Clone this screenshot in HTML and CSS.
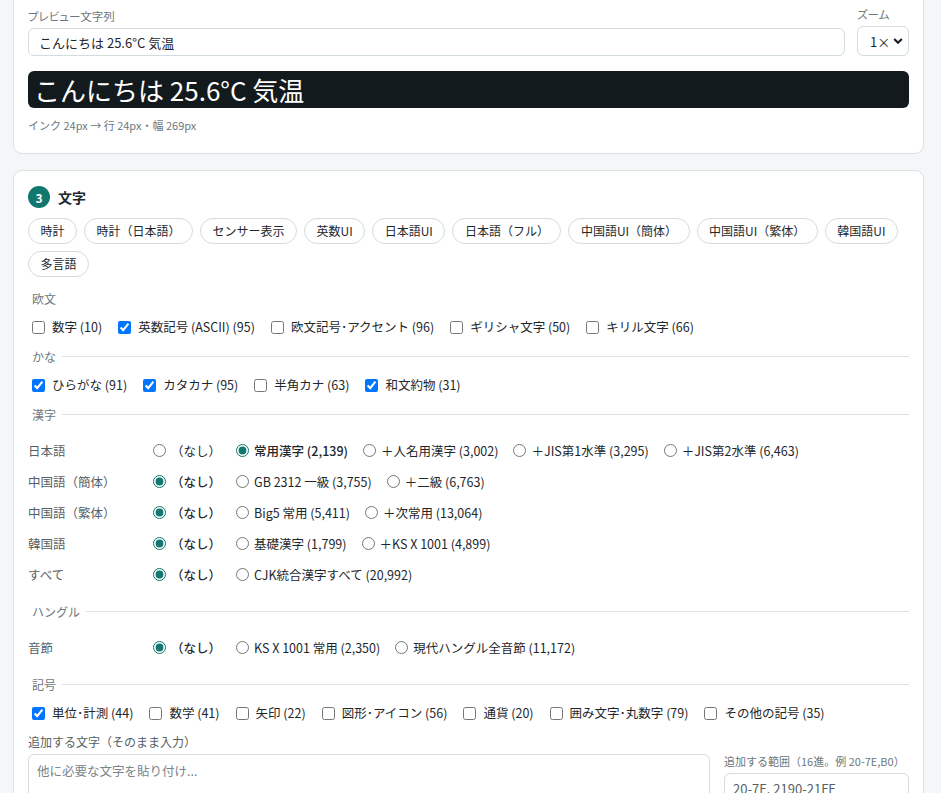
FILE: index.html
```html
<!DOCTYPE html>
<html lang="ja">
<head>
<meta charset="utf-8">
<title>文字</title>
<link rel="stylesheet" href="styles.css">
</head>
<body>
<div class="page">
  <section class="card card-preview">
    <div class="field-row">
      <div class="field grow">
        <label class="field-label">プレビュー文字列</label>
        <input class="text-input" type="text" value="こんにちは 25.6°C 気温">
      </div>
      <div class="field">
        <label class="field-label">ズーム</label>
        <div class="select-wrap">
          <select class="select"><option>1×</option></select>
          <svg class="chev" width="10" height="8" viewBox="0 0 10 8"><path d="M1.2 2 L5 5.8 L8.8 2" fill="none" stroke="#1a1f22" stroke-width="2.2"/></svg>
        </div>
      </div>
    </div>
    <div class="preview">こんにちは 25.6°C 気温</div>
    <div class="metrics">インク 24px → 行 24px・幅 269px</div>
  </section>

  <section class="card card-chars">
    <div class="card-head">
      <span class="badge">3</span>
      <h2 class="card-title">文字</h2>
    </div>
    <div class="chips">
      <button class="chip">時計</button>
      <button class="chip">時計（日本語）</button>
      <button class="chip">センサー表示</button>
      <button class="chip">英数UI</button>
      <button class="chip">日本語UI</button>
      <button class="chip">日本語（フル）</button>
      <button class="chip">中国語UI（簡体）</button>
      <button class="chip">中国語UI（繁体）</button>
      <button class="chip">韓国語UI</button>
      <button class="chip">多言語</button>
    </div>

    <div class="sec-title first">欧文</div>
    <div class="opts">
      <label class="opt"><input type="checkbox">数字 (10)</label>
      <label class="opt"><input type="checkbox" checked>英数記号 (ASCII) (95)</label>
      <label class="opt"><input type="checkbox">欧文記号･アクセント (96)</label>
      <label class="opt"><input type="checkbox">ギリシャ文字 (50)</label>
      <label class="opt"><input type="checkbox">キリル文字 (66)</label>
    </div>

    <div class="sec-title">かな</div>
    <div class="opts">
      <label class="opt"><input type="checkbox" checked>ひらがな (91)</label>
      <label class="opt"><input type="checkbox" checked>カタカナ (95)</label>
      <label class="opt"><input type="checkbox">半角カナ (63)</label>
      <label class="opt"><input type="checkbox" checked>和文約物 (31)</label>
    </div>

    <div class="sec-title">漢字</div>
    <div class="radio-grid">
      <div class="r-label">日本語</div>
      <div class="r-opts">
        <label class="ropt"><input type="radio" name="ja">（なし）</label>
        <label class="ropt on"><input type="radio" name="ja" checked>常用漢字 (2,139)</label>
        <label class="ropt"><input type="radio" name="ja">＋人名用漢字 (3,002)</label>
        <label class="ropt"><input type="radio" name="ja">＋JIS第1水準 (3,295)</label>
        <label class="ropt"><input type="radio" name="ja">＋JIS第2水準 (6,463)</label>
      </div>
      <div class="r-label">中国語（簡体）</div>
      <div class="r-opts">
        <label class="ropt on"><input type="radio" name="sc" checked>（なし）</label>
        <label class="ropt"><input type="radio" name="sc">GB 2312 一級 (3,755)</label>
        <label class="ropt"><input type="radio" name="sc">＋二級 (6,763)</label>
      </div>
      <div class="r-label">中国語（繁体）</div>
      <div class="r-opts">
        <label class="ropt on"><input type="radio" name="tc" checked>（なし）</label>
        <label class="ropt"><input type="radio" name="tc">Big5 常用 (5,411)</label>
        <label class="ropt"><input type="radio" name="tc">＋次常用 (13,064)</label>
      </div>
      <div class="r-label">韓国語</div>
      <div class="r-opts">
        <label class="ropt on"><input type="radio" name="ko" checked>（なし）</label>
        <label class="ropt"><input type="radio" name="ko">基礎漢字 (1,799)</label>
        <label class="ropt"><input type="radio" name="ko">＋KS X 1001 (4,899)</label>
      </div>
      <div class="r-label">すべて</div>
      <div class="r-opts">
        <label class="ropt on"><input type="radio" name="all" checked>（なし）</label>
        <label class="ropt"><input type="radio" name="all">CJK統合漢字すべて (20,992)</label>
      </div>
    </div>

    <div class="sec-title">ハングル</div>
    <div class="radio-grid">
      <div class="r-label">音節</div>
      <div class="r-opts">
        <label class="ropt on"><input type="radio" name="hg" checked>（なし）</label>
        <label class="ropt"><input type="radio" name="hg">KS X 1001 常用 (2,350)</label>
        <label class="ropt"><input type="radio" name="hg">現代ハングル全音節 (11,172)</label>
      </div>
    </div>

    <div class="sec-title">記号</div>
    <div class="opts">
      <label class="opt"><input type="checkbox" checked>単位･計測 (44)</label>
      <label class="opt"><input type="checkbox">数学 (41)</label>
      <label class="opt"><input type="checkbox">矢印 (22)</label>
      <label class="opt"><input type="checkbox">図形･アイコン (56)</label>
      <label class="opt"><input type="checkbox">通貨 (20)</label>
      <label class="opt"><input type="checkbox">囲み文字･丸数字 (79)</label>
      <label class="opt"><input type="checkbox">その他の記号 (35)</label>
    </div>

    <div class="extra">
      <div class="field grow">
        <label class="field-label dark">追加する文字（そのまま入力）</label>
        <textarea class="textarea" placeholder="他に必要な文字を貼り付け..."></textarea>
      </div>
      <div class="field range">
        <label class="field-label">追加する範囲（16進。例 20-7E,B0）</label>
        <input class="text-input range-input" type="text" value="20-7E, 2190-21FF">
      </div>
    </div>
  </section>
</div>
</body>
</html>
```

FILE: styles.css
```css
* { box-sizing: border-box; }
html, body { margin: 0; padding: 0; }
body {
  background: #f4f6f8;
  font-family: "Noto Sans CJK JP", "Noto Sans", sans-serif;
  color: #1e272b;
  font-size: 12.5px;
  overflow: hidden;
}
.page {
  padding: 0 17px 0 13px;
}
.card {
  background: #ffffff;
  border: 1px solid #d9e1e4;
  border-radius: 9px;
  padding: 14px;
}
.card-preview {
  margin-top: -9px;
  padding-bottom: 20px;
}
.card-chars {
  margin-top: 16px;
  display: flex;
  flex-direction: column;
  gap: 10px;
}

/* fields */
.field-row {
  display: flex;
  align-items: flex-end;
  gap: 12px;
}
.field {
  display: flex;
  flex-direction: column;
  gap: 4px;
}
.grow { flex: 1; min-width: 0; }
.field-label {
  font-size: 11.5px;
  line-height: 16px;
  color: #6d777c;
  font-feature-settings: "palt";
}
.field-label.dark { color: #555f64; font-feature-settings: normal; font-size: 12px; }
.text-input {
  height: 28px;
  border: 1px solid #d3dce0;
  border-radius: 6px;
  padding: 0 10px;
  font: inherit;
  font-size: 13px;
  color: #1e272b;
  background: #fff;
  outline: none;
}
.select-wrap {
  position: relative;
  width: 52px;
}
.select {
  appearance: none;
  -webkit-appearance: none;
  width: 52px;
  height: 30px;
  border: 1px solid #d3dce0;
  border-radius: 6px;
  background: #fff;
  font: inherit;
  font-size: 13px;
  color: #1e272b;
  padding: 0 0 0 12px;
}
.chev {
  position: absolute;
  right: 6px;
  top: 11px;
  pointer-events: none;
}
.preview {
  margin-top: 15px;
  height: 37px;
  background: #131a1d;
  border-radius: 6px;
  color: #ffffff;
  font-size: 26px;
  line-height: 37px;
  padding-left: 6px;
  white-space: nowrap;
  overflow: hidden;
}
.metrics {
  margin-top: 9px;
  font-size: 11px;
  line-height: 16px;
  color: #6d777c;
}

/* card 2 header */
.card-head {
  display: flex;
  align-items: center;
  gap: 8px;
  height: 22px;
  margin-top: 1px;
}
.badge {
  width: 22px;
  height: 22px;
  border-radius: 50%;
  background: #11776f;
  color: #fff;
  font-weight: 700;
  font-size: 12px;
  display: flex;
  align-items: center;
  justify-content: center;
}
.card-title {
  margin: 0;
  font-size: 14px;
  font-weight: 700;
  color: #1e272b;
}
.chips {
  display: flex;
  flex-wrap: wrap;
  gap: 7px;
}
.chip {
  height: 26px;
  padding: 0 11.5px;
  border: 1px solid #d3dce0;
  border-radius: 13px;
  background: #fff;
  font: inherit;
  font-size: 12px;
  color: #1e272b;
  line-height: 24px;
}

/* sections */
.sec-title {
  display: flex;
  align-items: center;
  gap: 6px;
  height: 18px;
  padding-left: 4px;
  font-size: 12px;
  color: #6d777c;
}
.sec-title::after {
  content: "";
  flex: 1;
  height: 1px;
  background: #dbe2e5;
}
.sec-title.first { margin-top: 2px; }
.sec-title.first::after { display: none; }

.opts {
  display: flex;
  flex-wrap: wrap;
  column-gap: 12px;
  row-gap: 4px;
  min-height: 20px;
  align-items: center;
}
.opt {
  display: inline-flex;
  align-items: center;
  gap: 4px;
  white-space: nowrap;
  line-height: 20px;
}
.opt input { margin: 0 3px 0 4px; width: 13px; height: 13px; }

.radio-grid {
  display: grid;
  grid-template-columns: 120px 1fr;
  grid-auto-rows: 31px;
  align-items: center;
  padding: 2px 0;
}
.r-label {
  color: #555f64;
  font-size: 12.5px;
}
.r-opts {
  display: flex;
  align-items: center;
  gap: 10px;
}
.ropt {
  display: inline-flex;
  align-items: center;
  gap: 2px;
  white-space: nowrap;
}
.ropt input {
  margin: 0 3px 0 5px;
  width: 13px;
  height: 13px;
  accent-color: #11776f;
}
.ropt.on { font-weight: 500; }

/* extra */
.extra {
  margin-top: 1px;
  display: flex;
  align-items: flex-end;
  gap: 14px;
}
.textarea {
  height: 50px;
  border: 1px solid #d3dce0;
  border-radius: 6px;
  padding: 6px 8px;
  font: inherit;
  font-size: 12.5px;
  resize: none;
  outline: none;
}
.textarea::placeholder { color: #7a8489; }
.range { width: 185px; flex: none; }
.range .field-label { font-size: 11px; white-space: nowrap; font-feature-settings: normal; }
.range-input { height: 31px; padding: 0 8px; color: #555f64; }
```
